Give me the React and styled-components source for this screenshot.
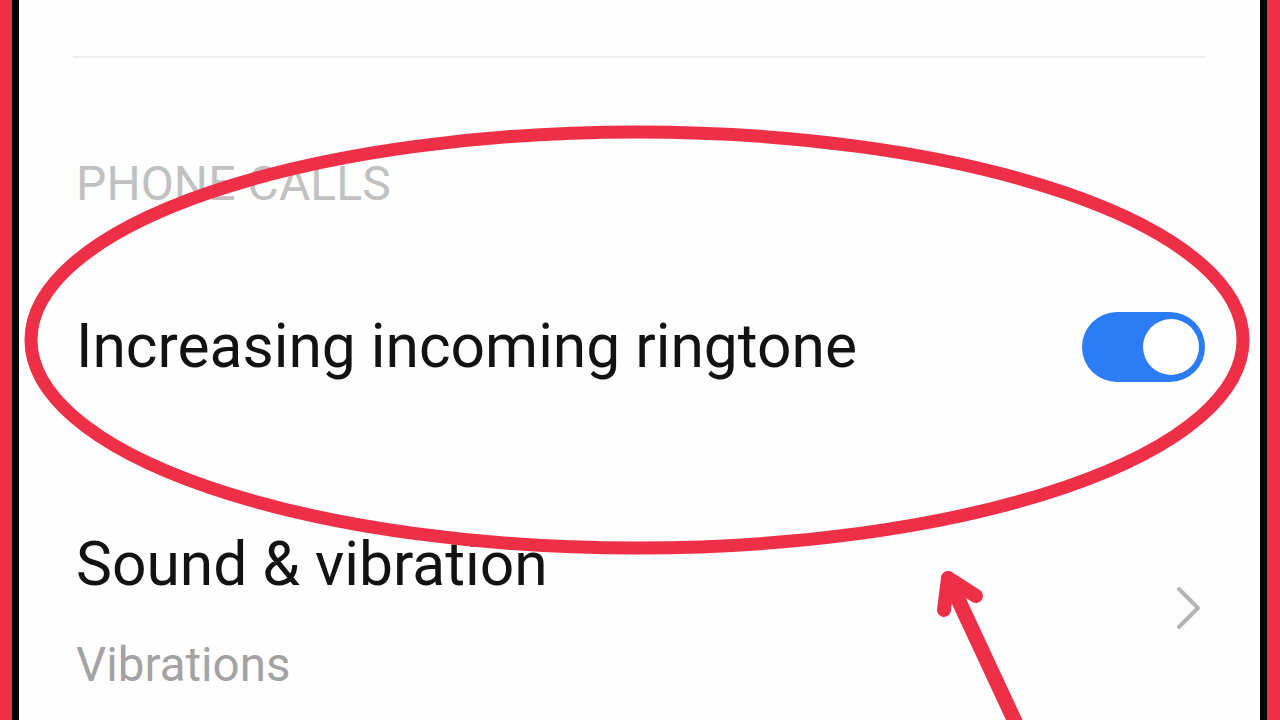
import React from "react";
import styled, { createGlobalStyle } from "styled-components";

const Global = createGlobalStyle`
  html, body { margin: 0; padding: 0; background: #ffffff; }
  body { font-family: Roboto, "Noto Sans", Arial, sans-serif; }
  * { box-sizing: border-box; }
`;

const Frame = styled.div`
  position: relative;
  width: 1280px;
  height: 720px;
  overflow: hidden;
  display: flex;
  background: #ed3047;
  padding: 0 13px 0 12px;
`;

const Bezel = styled.div`
  flex: 1;
  display: flex;
  background: #050505;
  padding: 0 7px;
`;

const Screen = styled.div`
  flex: 1;
  background: #fefefe;
  padding: 56px 55px 0 57px;
  display: flex;
  flex-direction: column;
`;

const Divider = styled.div`
  height: 2px;
  background: #ededed;
  margin-left: -3px;
`;

const SectionTitle = styled.div`
  margin-top: 96px;
  font-size: 48px;
  line-height: 60px;
  color: #c1c1c1;
  letter-spacing: 0.1px;
`;

const Row = styled.div`
  display: flex;
  align-items: center;
  justify-content: space-between;
  margin-top: ${(p) => p.$gap}px;
`;

const TextCol = styled.div`
  display: flex;
  flex-direction: column;
`;

const Title = styled.div`
  font-size: 60.5px;
  line-height: 70px;
  color: #121212;
`;

const Subtitle = styled.div`
  margin-top: 37px;
  font-size: 47.5px;
  line-height: 56px;
  color: #a3a3a3;
`;

const Toggle = styled.div`
  width: 123px;
  height: 70px;
  border-radius: 35px;
  background: #2b7cf5;
  display: flex;
  align-items: center;
  justify-content: flex-end;
  padding-right: 6px;
`;

const Knob = styled.div`
  width: 56px;
  height: 56px;
  border-radius: 50%;
  background: #ffffff;
`;

const Chevron = styled.svg`
  width: 30px;
  height: 46px;
  margin-right: 1px;
  margin-top: -8px;
`;

const Annotation = styled.svg`
  position: absolute;
  left: 0;
  top: 0;
  pointer-events: none;
`;

export default function App() {
  return (
    <>
      <Global />
      <Frame>
        <Bezel>
          <Screen>
            <Divider />
            <SectionTitle>PHONE CALLS</SectionTitle>
            <Row $gap={98}>
              <Title>Increasing incoming ringtone</Title>
              <Toggle>
                <Knob />
              </Toggle>
            </Row>
            <Row $gap={148}>
              <TextCol>
                <Title>Sound &amp; vibration</Title>
                <Subtitle>Vibrations</Subtitle>
              </TextCol>
              <Chevron viewBox="0 0 30 46">
                <path d="M5 4 L24 23 L5 42" fill="none" stroke="#b4b4b4" strokeWidth="4" strokeLinecap="round" strokeLinejoin="round" />
              </Chevron>
            </Row>
          </Screen>
        </Bezel>
        <Annotation width="1280" height="720" viewBox="0 0 1280 720">
          <ellipse cx="637" cy="340" rx="606" ry="208" fill="none" stroke="#ed3047" strokeWidth="13" />
          <path d="M1018 728 L950 582" fill="none" stroke="#ed3047" strokeWidth="15" strokeLinecap="round" />
          <path d="M944 610 L948 578 L976 596" fill="none" stroke="#ed3047" strokeWidth="14" strokeLinecap="round" strokeLinejoin="round" />
        </Annotation>
      </Frame>
    </>
  );
}
